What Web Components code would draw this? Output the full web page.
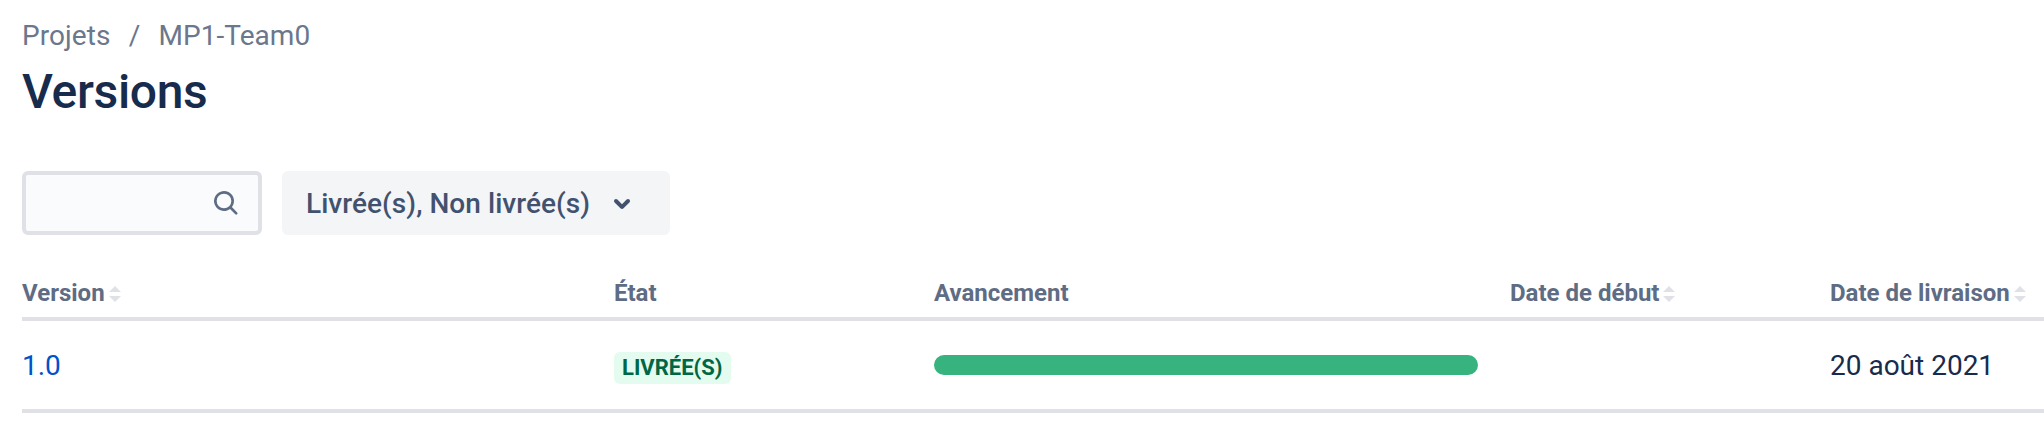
<!DOCTYPE html>
<html lang="fr">
<head>
<meta charset="utf-8">
<title>Versions</title>
<style>
html,body{margin:0;padding:0;background:#fff}
body{width:2044px;height:428px;overflow:hidden;font-family:Roboto,"Liberation Sans",sans-serif;color:#172b4d;font-size:28px}
</style>
</head>
<body>
<versions-page></versions-page>
<script>
const define = (name, html) => customElements.define(name, class extends HTMLElement {
  constructor() {
    super();
    const t = document.createElement('template');
    t.innerHTML = html;
    this.attachShadow({ mode: 'open' }).append(t.content.cloneNode(true));
  }
});

define('bread-crumbs', `
<style>
:host{display:flex;height:48px;line-height:48px;font-size:28px;color:#6b778c;white-space:pre;letter-spacing:.06px}
.sep{width:48px;text-align:center}
</style>
<slot name="parent"></slot><span class="sep">/</span><slot name="current"></slot>`);

define('page-title', `
<style>
:host{display:block}
h1{margin:0;font-size:48px;line-height:56px;font-weight:500;letter-spacing:-.35px;color:#172b4d}
</style>
<h1><slot></slot></h1>`);

define('search-field', `
<style>
:host{display:flex;box-sizing:border-box;width:240px;height:64px;border:4px solid #dfe1e6;border-radius:6px;background:#fafbfc;align-items:center;justify-content:flex-end;padding-right:16px}
svg{display:block;width:32px;height:32px}
</style>
<svg viewBox="0 0 24 24" fill="#5e6c84"><path fill-rule="evenodd" d="M16.436 15.085l3.94 4.01a1 1 0 0 1-1.425 1.402l-3.938-4.006a7.5 7.5 0 1 1 1.423-1.406zM10.5 16a5.5 5.5 0 1 0 0-11 5.5 5.5 0 0 0 0 11z"/></svg>`);

define('filter-button', `
<style>
:host{display:flex;box-sizing:border-box;width:388px;height:64px;border-radius:6px;background:#f4f5f7;color:#42526e;align-items:center;padding-left:24px;font-size:28px;font-weight:500;line-height:64px;letter-spacing:.05px;white-space:nowrap}
.label{width:292px;padding-top:1px;height:63px}
svg{display:block;width:48px;height:48px}
</style>
<span class="label"><slot></slot></span>
<svg viewBox="0 0 24 24" fill="#42526e"><path d="M8.292 10.293a1.009 1.009 0 0 0 0 1.419l2.939 2.965c.218.215.5.322.779.322s.556-.107.769-.322l2.93-2.955a1.01 1.01 0 0 0 0-1.419.987.987 0 0 0-1.406 0l-2.298 2.317-2.307-2.327a.99.99 0 0 0-1.406 0z"/></svg>`);

define('head-cell', `
<style>
:host{display:flex;font-size:24px;font-weight:700;line-height:40px;color:#5e6c84;white-space:nowrap}
svg{display:none;width:12px;height:16px;margin:13px 0 0 4px}
:host([sortable]) svg{display:block}
</style>
<slot></slot><svg viewBox="0 0 12 16" fill="#dfe1e6"><path d="M0 6 6 0 12 6zM0 10h12L6 16z"/></svg>`);

define('status-lozenge', `
<style>
:host{display:block;box-sizing:border-box;width:117px;height:32px;border-radius:6px;background:#e3fcef;color:#006644;padding:0 8px;font-size:22px;font-weight:700;line-height:32px;white-space:nowrap}
</style>
<slot></slot>`);

define('progress-bar', `
<style>:host{display:block;width:544px;height:20px;border-radius:10px;background:#36b37e}</style>`);

define('table-row', `
<style>
:host{display:grid;grid-template-columns:592px 320px 576px 320px 214px;box-sizing:border-box;border-bottom:4px solid #dfe1e6}
</style>
<slot></slot>`);

define('versions-page', `
<style>
:host{display:block;padding:12px 0 0 22px}
page-title{margin-top:4px}
.filters{display:flex;gap:20px;margin-top:51px}
.head{height:48px;margin-top:38px}
.body{height:92px}
.body>*{margin-top:21px;line-height:48px;white-space:nowrap}
.body>a{color:#0052cc;text-decoration:none}
.body>status-lozenge{margin-top:31px;line-height:32px}
.body>progress-bar{margin-top:34px}
</style>
<bread-crumbs><span slot="parent">Projets</span><span slot="current">MP1-Team0</span></bread-crumbs>
<page-title>Versions</page-title>
<div class="filters"><search-field></search-field><filter-button>Livrée(s), Non livrée(s)</filter-button></div>
<table-row class="head"><head-cell sortable>Version</head-cell><head-cell>État</head-cell><head-cell>Avancement</head-cell><head-cell sortable>Date de début</head-cell><head-cell sortable>Date de livraison</head-cell></table-row>
<table-row class="body"><a>1.0</a><status-lozenge>LIVRÉE(S)</status-lozenge><progress-bar></progress-bar><span></span><span>20 août 2021</span></table-row>`);
</script>
</body>
</html>
